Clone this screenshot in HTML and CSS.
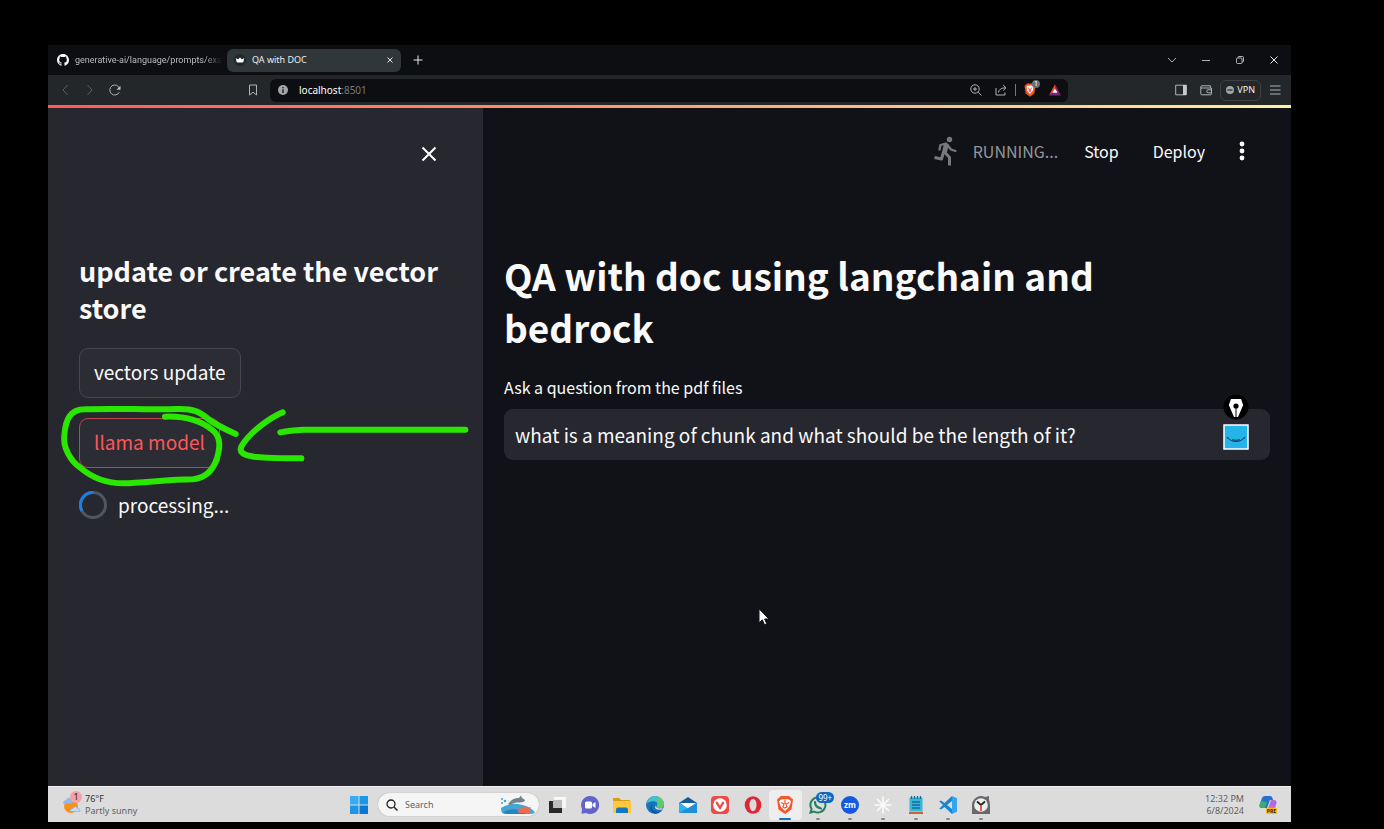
FILE: index.html
```html
<!DOCTYPE html>
<html lang="en">
<head>
<meta charset="utf-8">
<title>QA with DOC</title>
<link rel="stylesheet" href="styles.css">
</head>
<body>
<div class="desktop">
  <div class="tabs">
    <div class="tab tab-off">
      <svg class="i12" viewBox="0 0 16 16"><path fill="#fff" d="M8 0C3.58 0 0 3.58 0 8c0 3.54 2.29 6.53 5.47 7.59.4.07.55-.17.55-.38 0-.19-.01-.82-.01-1.49-2.01.37-2.53-.49-2.69-.94-.09-.23-.48-.94-.82-1.13-.28-.15-.68-.52-.01-.53.63-.01 1.08.58 1.23.82.72 1.21 1.87.87 2.33.66.07-.52.28-.87.51-1.07-1.78-.2-3.64-.89-3.64-3.95 0-.87.31-1.59.82-2.15-.08-.2-.36-1.02.08-2.12 0 0 .67-.21 2.2.82a7.6 7.6 0 0 1 4 0c1.53-1.04 2.2-.82 2.2-.82.44 1.1.16 1.92.08 2.12.51.56.82 1.27.82 2.15 0 3.07-1.87 3.75-3.65 3.95.29.25.54.73.54 1.48 0 1.07-.01 1.93-.01 2.2 0 .21.15.46.55.38A8.01 8.01 0 0 0 16 8c0-4.42-3.58-8-8-8z"/></svg>
      <span class="tab-text">generative-ai/language/prompts/exa</span>
    </div>
    <div class="tab tab-on">
      <svg class="i12" viewBox="0 0 12 12"><circle cx="6" cy="6" r="6" fill="#22282b"/><path fill="#fff" d="M1.800 4 4 5.600 6 3.500l2 2.100L10.200 4 9.300 8.200Q6 9 2.700 8.200z"/></svg>
      <span class="tab-text">QA with DOC</span>
      <button class="icon-btn" aria-label="Close tab"><svg class="i8" viewBox="0 0 8 8"><path class="ln w" d="m1.500 1.500 5 5m0-5-5 5"/></svg></button>
    </div>
    <button class="icon-btn" aria-label="New tab"><svg class="i10" viewBox="0 0 10 10"><path class="ln w" d="M5 .5v9M.5 5h9"/></svg></button>
    <div class="win-btns">
      <button class="icon-btn" aria-label="Search tabs"><svg class="i10" viewBox="0 0 10 10"><path class="ln" d="m1 3 4 4 4-4"/></svg></button>
      <button class="icon-btn" aria-label="Minimize"><svg class="i10" viewBox="0 0 10 10"><path class="ln" d="M1 5.500h8"/></svg></button>
      <button class="icon-btn" aria-label="Restore"><svg class="i10" viewBox="0 0 10 10"><rect class="ln" x="1.500" y="3" width="5.500" height="5.500" rx="1"/><path class="ln" d="M3 3V2.500Q3 1.500 4 1.500h3.500q1 0 1 1V6q0 1-1 1H7"/></svg></button>
      <button class="icon-btn" aria-label="Close"><svg class="i10" viewBox="0 0 10 10"><path class="ln w" d="m1.500 1.500 7 7m0-7-7 7"/></svg></button>
    </div>
  </div>

  <div class="toolbar">
    <div class="nav">
      <button class="icon-btn" aria-label="Back"><svg class="i12" viewBox="0 0 12 12"><path class="ln dim" d="M8.500 1 4 6l4.500 5"/></svg></button>
      <button class="icon-btn" aria-label="Forward"><svg class="i12" viewBox="0 0 12 12"><path class="ln dim" d="M3.500 1 8 6l-4.500 5"/></svg></button>
      <button class="icon-btn" aria-label="Reload"><svg class="i12" viewBox="0 0 12 12"><path class="ln" d="M10.300 8.200A5 5 0 1 1 10.600 4.600"/><path fill="#bcc2c4" d="M11.500 1.800v4H7.500z"/></svg></button>
    </div>
    <button class="icon-btn bookmark" aria-label="Bookmark"><svg class="i12" viewBox="0 0 12 12"><path class="ln" d="M2.500 1h7v10L6 8.200 2.500 11z"/></svg></button>
    <div class="address">
      <svg class="i10" viewBox="0 0 10 10"><circle cx="5" cy="5" r="5" fill="#a3a6a9"/><path stroke="#0c0e11" stroke-width="1.300" d="M5 4.300V8M5 2v1.300"/></svg>
      <span class="url">localhost<span class="port">:8501</span></span>
      <div class="address-icons">
        <svg class="i12" viewBox="0 0 12 12"><circle class="ln" cx="5" cy="5" r="4.200"/><path class="ln" d="m8.200 8.200 3.300 3.300M5 3v4M3 5h4"/></svg>
        <svg class="i12" viewBox="0 0 12 12"><path class="ln" d="M1 4v7h9V8.500M3.500 8.500Q4 4 10.500 3.800M8.200 1l2.800 2.800-2.800 2.700"/></svg>
        <span class="divider"></span>
        <span class="shield"><svg viewBox="0 0 12 14"><path fill="#f4511e" d="M3 .5h6L11.500 3 10.300 10.500 6 13.700 1.700 10.500.5 3z"/><path fill="#fff" d="m2.500 3.500 2-1h3l2 1-.6 4L6 11 3.100 7.500z"/><path stroke="#f4511e" fill="none" d="M4 4.500 5.200 6 6 9l.8-3L8 4.500"/></svg><span class="count">1</span></span>
        <svg class="i12" viewBox="0 0 12 12"><path fill="#ff4724" d="M6 .3 0 11.500 6 7z"/><path fill="#9e1f63" d="M6 .3 12 11.500 6 7z"/><path fill="#662d91" d="M0 11.500h12L6 7.500z"/><path fill="#fff" d="m6 4.500 2.500 4.300h-5z"/></svg>
      </div>
    </div>
    <div class="tools">
      <button class="icon-btn" aria-label="Sidebar"><svg class="i12" viewBox="0 0 12 12"><path class="ln" d="M.7 1.200h10.600v9.600H.7z"/><path fill="#c4c9cb" d="M8 1h3.500v10H8z"/></svg></button>
      <button class="icon-btn" aria-label="Wallet"><svg class="i12" viewBox="0 0 12 12"><path class="ln" d="M10.500 3.500V1.800H1.800q-1 0-1 1v7q0 1 1 1h8.700q1 0 1-1V4H1M11.500 5.800H8.200a1.500 1.500 0 0 0 0 3h3.300"/></svg></button>
      <button class="vpn"><svg class="i8" viewBox="0 0 8 8"><circle cx="4" cy="4" r="4" fill="#a0a4a8"/><path stroke="#24282b" stroke-width="1.200" d="M1.500 4h5"/></svg>VPN</button>
      <button class="icon-btn" aria-label="Menu"><svg class="i12" viewBox="0 0 12 12"><path class="ln" d="M1 2h10.500M1 6h10.500M1 10h10.500"/></svg></button>
    </div>
  </div>

  <div class="app">
    <aside class="sidebar">
      <div class="side-head"><button class="icon-btn" aria-label="Close sidebar"><svg class="i16" viewBox="0 0 16 16"><path class="x" d="m1.500 1.500 13 13m0-13-13 13"/></svg></button></div>
      <h2 class="side-title">update or create the vector store</h2>
      <button class="btn">vectors update</button>
      <button class="btn btn-active">llama model</button>
      <div class="status"><svg class="spinner" viewBox="0 0 28 28"><circle cx="14" cy="14" r="12.500" stroke="#505661"/><path stroke="#1c7fe0" d="M14.500 1.500A12.500 12.500 0 0 0 3 20"/></svg><span>processing...</span></div>
      <svg class="ink" viewBox="0 0 1290 450">
        <path d="M345 80C400 78 450 90 487 120C515 142 510 175 500 208C487 245 465 264 430 268C350 268 280 280 220 280C165 280 125 262 92 234C62 214 38 172 43 135C47 88 60 58 105 58C200 54 290 60 380 57C430 55 450 66 475 87C500 106 530 120 557 132"/>
        <path d="M698 67C660 84 600 125 575 168C565 187 580 195 612 200C650 205 700 204 754 205"/>
        <path d="M691 127Q720 121 760 119H1246"/>
      </svg>
    </aside>
    <main class="main">
      <header class="main-head">
        <div class="running">
          <svg class="runner" viewBox="0 0 24 30"><circle cx="15.500" cy="3.500" r="2.700" fill="#77787c"/><g fill="none" stroke="#77787c" stroke-linejoin="round"><path stroke-linecap="round" stroke-width="2.300" d="M5.500 13.500 6.500 9l5.500-1.500 3 3.500 2 2.500 4.500 1.500"/><path stroke-width="5" d="m12.500 8-2.200 9"/><path stroke-width="3" d="m10.500 16 5 5.500v8M9.500 16l-2 7-7-1.500"/></g></svg>
          <span>RUNNING...</span>
        </div>
        <button class="link-btn">Stop</button>
        <button class="link-btn">Deploy</button>
        <button class="icon-btn" aria-label="Main menu"><svg class="dots" viewBox="0 0 6 20"><g fill="#fff"><circle cx="3" cy="3" r="2.400"/><circle cx="3" cy="10" r="2.400"/><circle cx="3" cy="17" r="2.400"/></g></svg></button>
      </header>
      <h1 class="title">QA with doc using langchain and bedrock</h1>
      <label class="label" for="question">Ask a question from the pdf files</label>
      <div class="field">
        <input class="input" id="question" type="text" value="what is a meaning of chunk and what should be the length of it?">
        <svg class="pen" viewBox="0 0 26 60">
          <circle cx="13" cy="12" r="12.500" fill="#000"/><path fill="#fff" d="M8 4h10l2.200 6-5.200 12h-4L5.800 10z"/><circle cx="13" cy="11" r="2.600" fill="#000"/><path stroke="#000" d="M13 12v10"/>
          <rect x="1" y="30" width="24" height="24" fill="#25b4ea" stroke="#fff" stroke-width="1.500"/><path fill="none" stroke="#163f66" stroke-width="1.200" d="M4 42q3.500 4.500 9 4.500t9-4.500M9 44.500q4 1.500 8 0"/>
        </svg>
      </div>
      <svg class="cursor" viewBox="0 0 12 18"><path fill="#fff" stroke="#111" d="M1 .8v14l3.300-3 2.200 5 2.300-1-2.200-4.800H11z"/></svg>
    </main>
  </div>

  <div class="taskbar">
    <div class="weather">
      <span class="weather-icon"><svg viewBox="0 0 20 18"><circle cx="9" cy="10" r="7" fill="#f5921e"/><path fill="#8fb9ea" d="M1 7.500Q1 4.500 4 4q2-4 5.500-1l1 4.500z"/><path fill="#c3d9f5" stroke="#7fa6df" stroke-width=".6" d="M8 15.500q0-3 2.800-3 2-3.500 4.700-.5 3 .5 2.500 3.500z"/></svg><span class="alert">1</span></span>
      <div class="stack"><span class="dark">76°F</span><span>Partly sunny</span></div>
    </div>
    <div class="dock">
      <button class="app-btn start" aria-label="Start"><svg viewBox="0 0 18 18"><path fill="#35adf0" d="M0 0h8.500v8.500H0z"/><path fill="#1c97e6" d="M9.500 0H18v8.500H9.500zM0 9.500h8.500V18H0z"/><path fill="#0878d4" d="M9.500 9.500H18V18H9.500z"/></svg></button>
      <button class="search"><svg class="i12" viewBox="0 0 12 12"><circle cx="5" cy="5" r="4" fill="none" stroke="#222" stroke-width="1.300"/><path stroke="#222" stroke-width="1.500" d="m8 8 3.500 3.500"/></svg><span>Search</span>
        <svg class="dolphin" viewBox="0 0 36 20"><path fill="#43a7d5" d="M1 13Q8 8 18 9t17 8q-1 2-4 2H5q-4 0-4-6z"/><path fill="#2386c4" d="M3 17q10-5 18-1l5 3H6z"/><path fill="#73828b" d="M8 9Q13 2 19 3l2-2.500L22 3q3 1 3 3-3 2-7 1.500-4-.5-8 2.500z"/><path fill="#ef6b4b" d="m18 13 3 1 3-3 3 2 4-1-2 4 2 2H20l-3-1 2-2z"/><circle cx="2" cy="4" r="1" fill="#37a9dc"/><circle cx="5" cy="6" r="1.300" fill="#37a9dc"/><circle cx="2" cy="8" r="1" fill="#37a9dc"/></svg></button>
      <div class="apps">
        <button class="app-btn" aria-label="Task view"><svg viewBox="0 0 18 18"><path fill="#f7f7f7" d="M6 1h12v11H6z"/><path fill="#292929" d="M1 5h13v12H1z"/><path fill="#bdbdbd" d="M5 4h9v8H5z"/></svg></button>
        <button class="app-btn" aria-label="Chat"><svg viewBox="0 0 18 18"><path fill="#6264c8" d="M9 0a9 9 0 1 1-4 17l-4.500.8L1 13A9 9 0 0 1 9 0z"/><rect x="4" y="5.500" width="7" height="7" rx="1.500" fill="#fff"/><path fill="#fff" d="m11.500 8 3-2v6l-3-2z"/></svg></button>
        <button class="app-btn" aria-label="File Explorer"><svg viewBox="0 0 18 18"><path fill="#dc9b17" d="M0 2h6l2 2h9v4H0z"/><path fill="#ffc83d" d="M0 5h18v12H0z"/><path fill="#1576c8" d="M3 13.500q0-2 2-2h8q2 0 2 2V17H3z"/></svg></button>
        <button class="app-btn" aria-label="Edge"><svg viewBox="0 0 18 18"><circle cx="9" cy="9" r="9" fill="#1673ba"/><path fill="#42bfd0" d="M.3 8C1.500 3 5 0 9 0q5 0 7.800 4.500Q19 9 16 11q-3 2-5.500 0Q13 6 8 5.200 3 5 .3 8z"/><path fill="#65c96c" d="M11 .3Q18 2 18 8.500 17.500 12 14 12q-2.500 0-3.500-1 2-2 .5-5z"/><path fill="#0d4f9c" d="M6 8q-2 7 5 8 2 0 3.500-1Q12 18.500 8 17 2 14 6 8z"/><path fill="#dcdcdd" d="M10 9q.5 1.500 0 2 3 2.500 7 .5l-1 2q-6 1-7-2z"/></svg></button>
        <button class="app-btn" aria-label="Mail"><svg viewBox="0 0 18 18"><path fill="#155b9d" d="m0 7 9-6 9 6v5H0z"/><path fill="#fff" d="M1 7h16l-8 6z"/><path fill="#27b4ef" d="m0 7 10 6-10 4z"/><path fill="#1f8fdc" d="M18 7v10H0z"/></svg></button>
        <button class="app-btn" aria-label="Vivaldi"><svg viewBox="0 0 18 18"><rect width="18" height="18" rx="4" fill="#ef4b45"/><circle cx="9" cy="9" r="6.800" fill="#fff"/><path fill="none" stroke="#ef4b45" stroke-linecap="round" stroke-width="2.300" d="m5.800 6.800 3.200 5 3-5"/></svg></button>
        <button class="app-btn" aria-label="Opera"><svg viewBox="0 0 18 18"><ellipse cx="9" cy="9" rx="8.300" ry="8.800" fill="#df2634"/><ellipse cx="9" cy="9" rx="3.500" ry="6.200" fill="#dcdcdd"/></svg></button>
        <button class="app-btn current" aria-label="Brave"><svg viewBox="0 0 18 18"><path fill="#fb542b" d="M5 0h8l4 3.500-1.500 10L9 18l-6.500-4.500L1 3.500z"/><path fill="#fff" d="m4 4 3-1 2 .5 2-.5 3 1 1 2-2 5-4 4-4-4-2-5z"/><path fill="none" stroke="#fb542b" stroke-width="1.200" d="M5 6.500 8 8l-1 3 2 1 2-1-1-3 3-1.500M9 4v4"/></svg></button>
        <button class="app-btn open" aria-label="WhatsApp"><svg viewBox="0 0 18 18"><path fill="none" stroke="#21805e" stroke-width="2" d="M9 1.500a7.500 7.500 0 1 1-3.800 14L1.500 16.500 2.600 13A7.500 7.500 0 0 1 9 1.500z"/><path fill="none" stroke="#21805e" stroke-linecap="round" stroke-width="2.200" d="M6 6q0 5 6 6.500"/></svg><span class="badge">99+</span></button>
        <button class="app-btn open" aria-label="Zoom"><svg viewBox="0 0 18 18"><circle cx="9" cy="9" r="9" fill="#1458df"/><text class="zm" x="9" y="12" text-anchor="middle">zm</text></svg></button>
        <button class="app-btn open" aria-label="Slack"><svg viewBox="0 0 18 18"><path stroke="#fafafa" stroke-linecap="round" stroke-width="1.600" d="M9 1v16M1 9h16M3.500 3.500l11 11M14.500 3.500l-11 11"/></svg></button>
        <button class="app-btn open" aria-label="Notepad"><svg viewBox="0 0 18 18"><path fill="#37b5dc" d="M2.500 1.500h13v14h-13z"/><path fill="#c96332" d="M2 16h14v2H2z"/><path stroke="#156f91" stroke-width="1.300" d="M5 6h8M5 9h8M5 12h8M4.500 0v3M7.500 0v3M10.500 0v3M13.500 0v3"/></svg></button>
        <button class="app-btn open" aria-label="Visual Studio Code"><svg viewBox="0 0 18 18"><path fill="#1687d2" d="M13 0 5.500 7 2 4.500.2 5.300 4 9 .2 12.700l1.800.8L5.500 11l7.500 7V13L8 9l5-4z"/><path fill="#35a4ee" d="m13 0 5 2.200v13.600L13 18z"/></svg></button>
        <button class="app-btn open" aria-label="Clock"><svg viewBox="0 0 18 18"><path fill="#68696b" d="M0 9a9 9 0 0 1 13-8l4-1v4q1 2 1 5v9H0z"/><circle cx="9" cy="9" r="6.800" fill="#eee"/><path fill="none" stroke="#252525" stroke-width="1.800" d="M5 5.500 9 9l4-3.500"/><path stroke="#e45132" stroke-width="1.800" d="M9 9v6"/></svg></button>
      </div>
    </div>
    <div class="tray">
      <div class="stack end"><span>12:32 PM</span><span>6/8/2024</span></div>
      <span class="copilot"><svg viewBox="0 0 18 18"><path fill="#2870d2" d="M6 0h5q2 0 2.500 2L14 4h-3L8 12H3Q0 12 .5 9L3 2q.8-2 3-2z"/><path fill="#38ae70" d="m2 5 6 1-2 6H3Q0 12 .5 9z"/><path fill="#b56bdf" d="M12 4h3q3 0 2.500 3L16 12q-1 4-4 4H8z"/><path fill="#ef6ca2" d="m10 10 6.500 1q-1 5-4.500 5H8z"/></svg><span class="pre">PRE</span></span>
    </div>
  </div>
</div>
</body>
</html>
```

FILE: styles.css
```css
* { box-sizing: border-box; }
body {
  margin: 0;
  background: #000;
  color: #fafafa;
  font-family: "Noto Sans CJK JP", "Noto Sans", sans-serif;
}
button { margin: 0; padding: 0; border: 0; background: none; color: inherit; font: inherit; }
svg { display: block; flex: none; }
.desktop {
  display: flex;
  flex-direction: column;
  min-height: 100vh;
  padding: 45px 93px 7px 48px;
}
.icon-btn { display: flex; align-items: center; justify-content: center; }
.i8 { width: 8px; height: 8px; }
.i10 { width: 10px; height: 10px; }
.i12 { width: 12px; height: 12px; }
.i16 { width: 16px; height: 16px; }
.ln { fill: none; stroke: #aeb4b6; stroke-width: 1; }
.ln.w { stroke: #e6e8e9; }
.ln.dim { stroke: #5c6163; }

.tabs, .toolbar { font-family: "Noto Sans", sans-serif; font-size: 9px; line-height: 12px; }
.tabs { display: flex; align-items: center; height: 30px; padding-right: 12px; background: #0d0e11; }
.tab { display: flex; align-items: center; gap: 6px; height: 23px; }
.tab-text { white-space: nowrap; }
.tab-off { width: 179px; padding: 0 9px; color: #b9bbbd; }
.tab-off .tab-text {
  font-family: Roboto, sans-serif;
  -webkit-mask-image: linear-gradient(90deg, #000 88%, transparent);
  mask-image: linear-gradient(90deg, #000 88%, transparent);
}
.tab-on { width: 174px; margin-right: 12px; padding: 0 7px; border-radius: 6px; background: #30373b; color: #eceeee; }
.tab-on .icon-btn { margin-left: auto; }
.win-btns { display: flex; gap: 24px; margin-left: auto; }

.toolbar { display: flex; align-items: center; height: 30px; padding: 0 10px 0 11px; background: #23272a; }
.nav { display: flex; gap: 13px; }
.bookmark { margin-left: 126px; }
.address {
  display: flex;
  align-items: center;
  flex: 0 1 798px;
  height: 23px;
  margin-left: 11px;
  padding: 0 7px 0 8px;
  border-radius: 6px;
  background: #0c0e12;
}
.url { margin-left: 11px; color: #fff; font-size: 10px; }
.port { color: #777b7f; }
.address-icons { display: flex; align-items: center; gap: 13px; margin-left: auto; }
.divider { width: 1px; height: 12px; margin: 0 -5px; background: #777; }
.shield { position: relative; }
.shield svg { width: 12px; height: 14px; }
.count {
  position: absolute;
  top: -3px;
  right: -4px;
  width: 8px;
  height: 8px;
  border-radius: 4px;
  background: #6a7077;
  color: #fff;
  font-size: 7px;
  line-height: 8px;
  text-align: center;
}
.tools { display: flex; align-items: center; gap: 13px; margin-left: auto; }
.vpn {
  display: flex;
  align-items: center;
  gap: 3px;
  height: 21px;
  margin: 0 -5px;
  padding: 0 5px;
  border: 1px solid #3d4144;
  border-radius: 6px;
  color: #f0f0f0;
}

.app {
  display: flex;
  flex: 1;
  border-top: 3px solid;
  border-image: linear-gradient(90deg, #ff5a55, #ff9068 40%, #ffce82 76%, #fff39a) 1;
  background: #111218;
}
.sidebar { position: relative; flex: 0 0 35%; padding: 0 31px; background: #272730; }
.side-head { display: flex; justify-content: flex-end; height: 144px; padding: 38px 15px 0 0; }
.side-head .icon-btn { height: 16px; }
.x { fill: none; stroke: #fff; stroke-width: 2; }
.side-title { margin: 0 0 22px; font-size: 27px; font-weight: 700; line-height: 37px; }
.btn {
  display: block;
  height: 50px;
  margin-bottom: 20px;
  padding: 0 14px 2px;
  border: 1px solid #454750;
  border-radius: 9px;
  background: #2b2c34;
  font-size: 19px;
  line-height: 28px;
}
.btn-active { border-color: #b8484f; color: #ff5558; }
.status { display: flex; align-items: center; gap: 11px; height: 34px; font-size: 19px; line-height: 28px; }
.spinner { width: 28px; height: 28px; fill: none; stroke-width: 3; }
.ink {
  position: absolute;
  top: 282px;
  left: 2px;
  width: 430px;
  fill: none;
  stroke: #2be600;
  stroke-width: 18;
  stroke-linecap: round;
  stroke-linejoin: round;
}

.main { position: relative; flex: 1; min-width: 0; padding: 0 21px; }
.main-head {
  display: flex;
  align-items: center;
  justify-content: flex-end;
  height: 141px;
  padding: 0 25px 56px 0;
  font-size: 16px;
  line-height: 24px;
}
.running { display: flex; align-items: center; gap: 15px; margin-right: 26px; color: #94969b; }
.runner { width: 24px; height: 30px; }
.link-btn { margin-right: 34px; }
.dots { width: 6px; height: 20px; }
.title { margin: 0 0 22px; padding-right: 40px; font-size: 37px; font-weight: 700; line-height: 52px; }
.label { display: block; margin-bottom: 10px; font-size: 16px; line-height: 24px; }
.field { position: relative; }
.input {
  width: 100%;
  height: 51px;
  padding: 0 11px;
  border: 0;
  border-radius: 9px;
  outline: 0;
  background: #272730;
  color: #fafafa;
  font: 19px "Noto Sans CJK JP", "Noto Sans", sans-serif;
}
.pen { position: absolute; top: -14px; right: 21px; width: 26px; height: 60px; }
.cursor { position: absolute; top: 500px; left: 275px; width: 12px; height: 18px; }

.taskbar {
  display: grid;
  grid-template-columns: 1fr auto 1fr;
  align-items: center;
  height: 36px;
  padding: 0 14px;
  border-top: 1px solid #f2f2f2;
  background: #dcdcdd;
  color: #606164;
  font: 9px/12px "Noto Sans", sans-serif;
}
.weather { display: flex; align-items: center; gap: 3px; }
.weather-icon { position: relative; }
.weather-icon svg { width: 20px; height: 18px; }
.alert {
  position: absolute;
  top: -5px;
  right: 0;
  width: 12px;
  height: 12px;
  border-radius: 6px;
  background: #f7a0a5;
  color: #222;
  text-align: center;
}
.stack { display: flex; flex-direction: column; }
.end { text-align: right; }
.dark { color: #333; }
.dock { display: flex; align-items: center; margin-left: 8px; }
.app-btn { position: relative; display: grid; place-items: center; height: 30px; border-radius: 4px; }
.app-btn svg { width: 18px; height: 18px; }
.start { width: 18px; margin-right: 10px; }
.search {
  display: flex;
  align-items: center;
  gap: 7px;
  width: 161px;
  height: 23px;
  padding: 0 3px 0 8px;
  border-radius: 12px;
  background: #f5f5f5;
  box-shadow: 0 0 1px #888;
}
.dolphin { width: 36px; height: 20px; margin-left: auto; }
.apps { display: grid; grid-template-columns: repeat(14, 1fr); width: 456px; margin-left: 2px; }
.current { background: #eeeeef; }
.current::after, .open::after {
  content: "";
  position: absolute;
  bottom: 0;
  left: 50%;
  width: 4px;
  height: 2px;
  border-radius: 1px;
  background: #87888a;
  translate: -50%;
}
.current::after { width: 12px; background: #1670c5; }
.badge {
  position: absolute;
  top: 2px;
  right: 0;
  padding: 0 2px;
  border-radius: 6px;
  background: #0b68bd;
  color: #fff;
  font-size: 8px;
  line-height: 11px;
}
.zm { fill: #fff; font: 700 8px "Open Sans", sans-serif; }
.tray { display: flex; align-items: center; justify-content: flex-end; gap: 15px; }
.copilot { position: relative; }
.copilot svg { width: 18px; height: 18px; }
.pre {
  position: absolute;
  right: 0;
  bottom: 0;
  padding: 0 1px;
  background: #fcbc18;
  color: #222;
  font-size: 5px;
  font-weight: 700;
  line-height: 6px;
}
```
